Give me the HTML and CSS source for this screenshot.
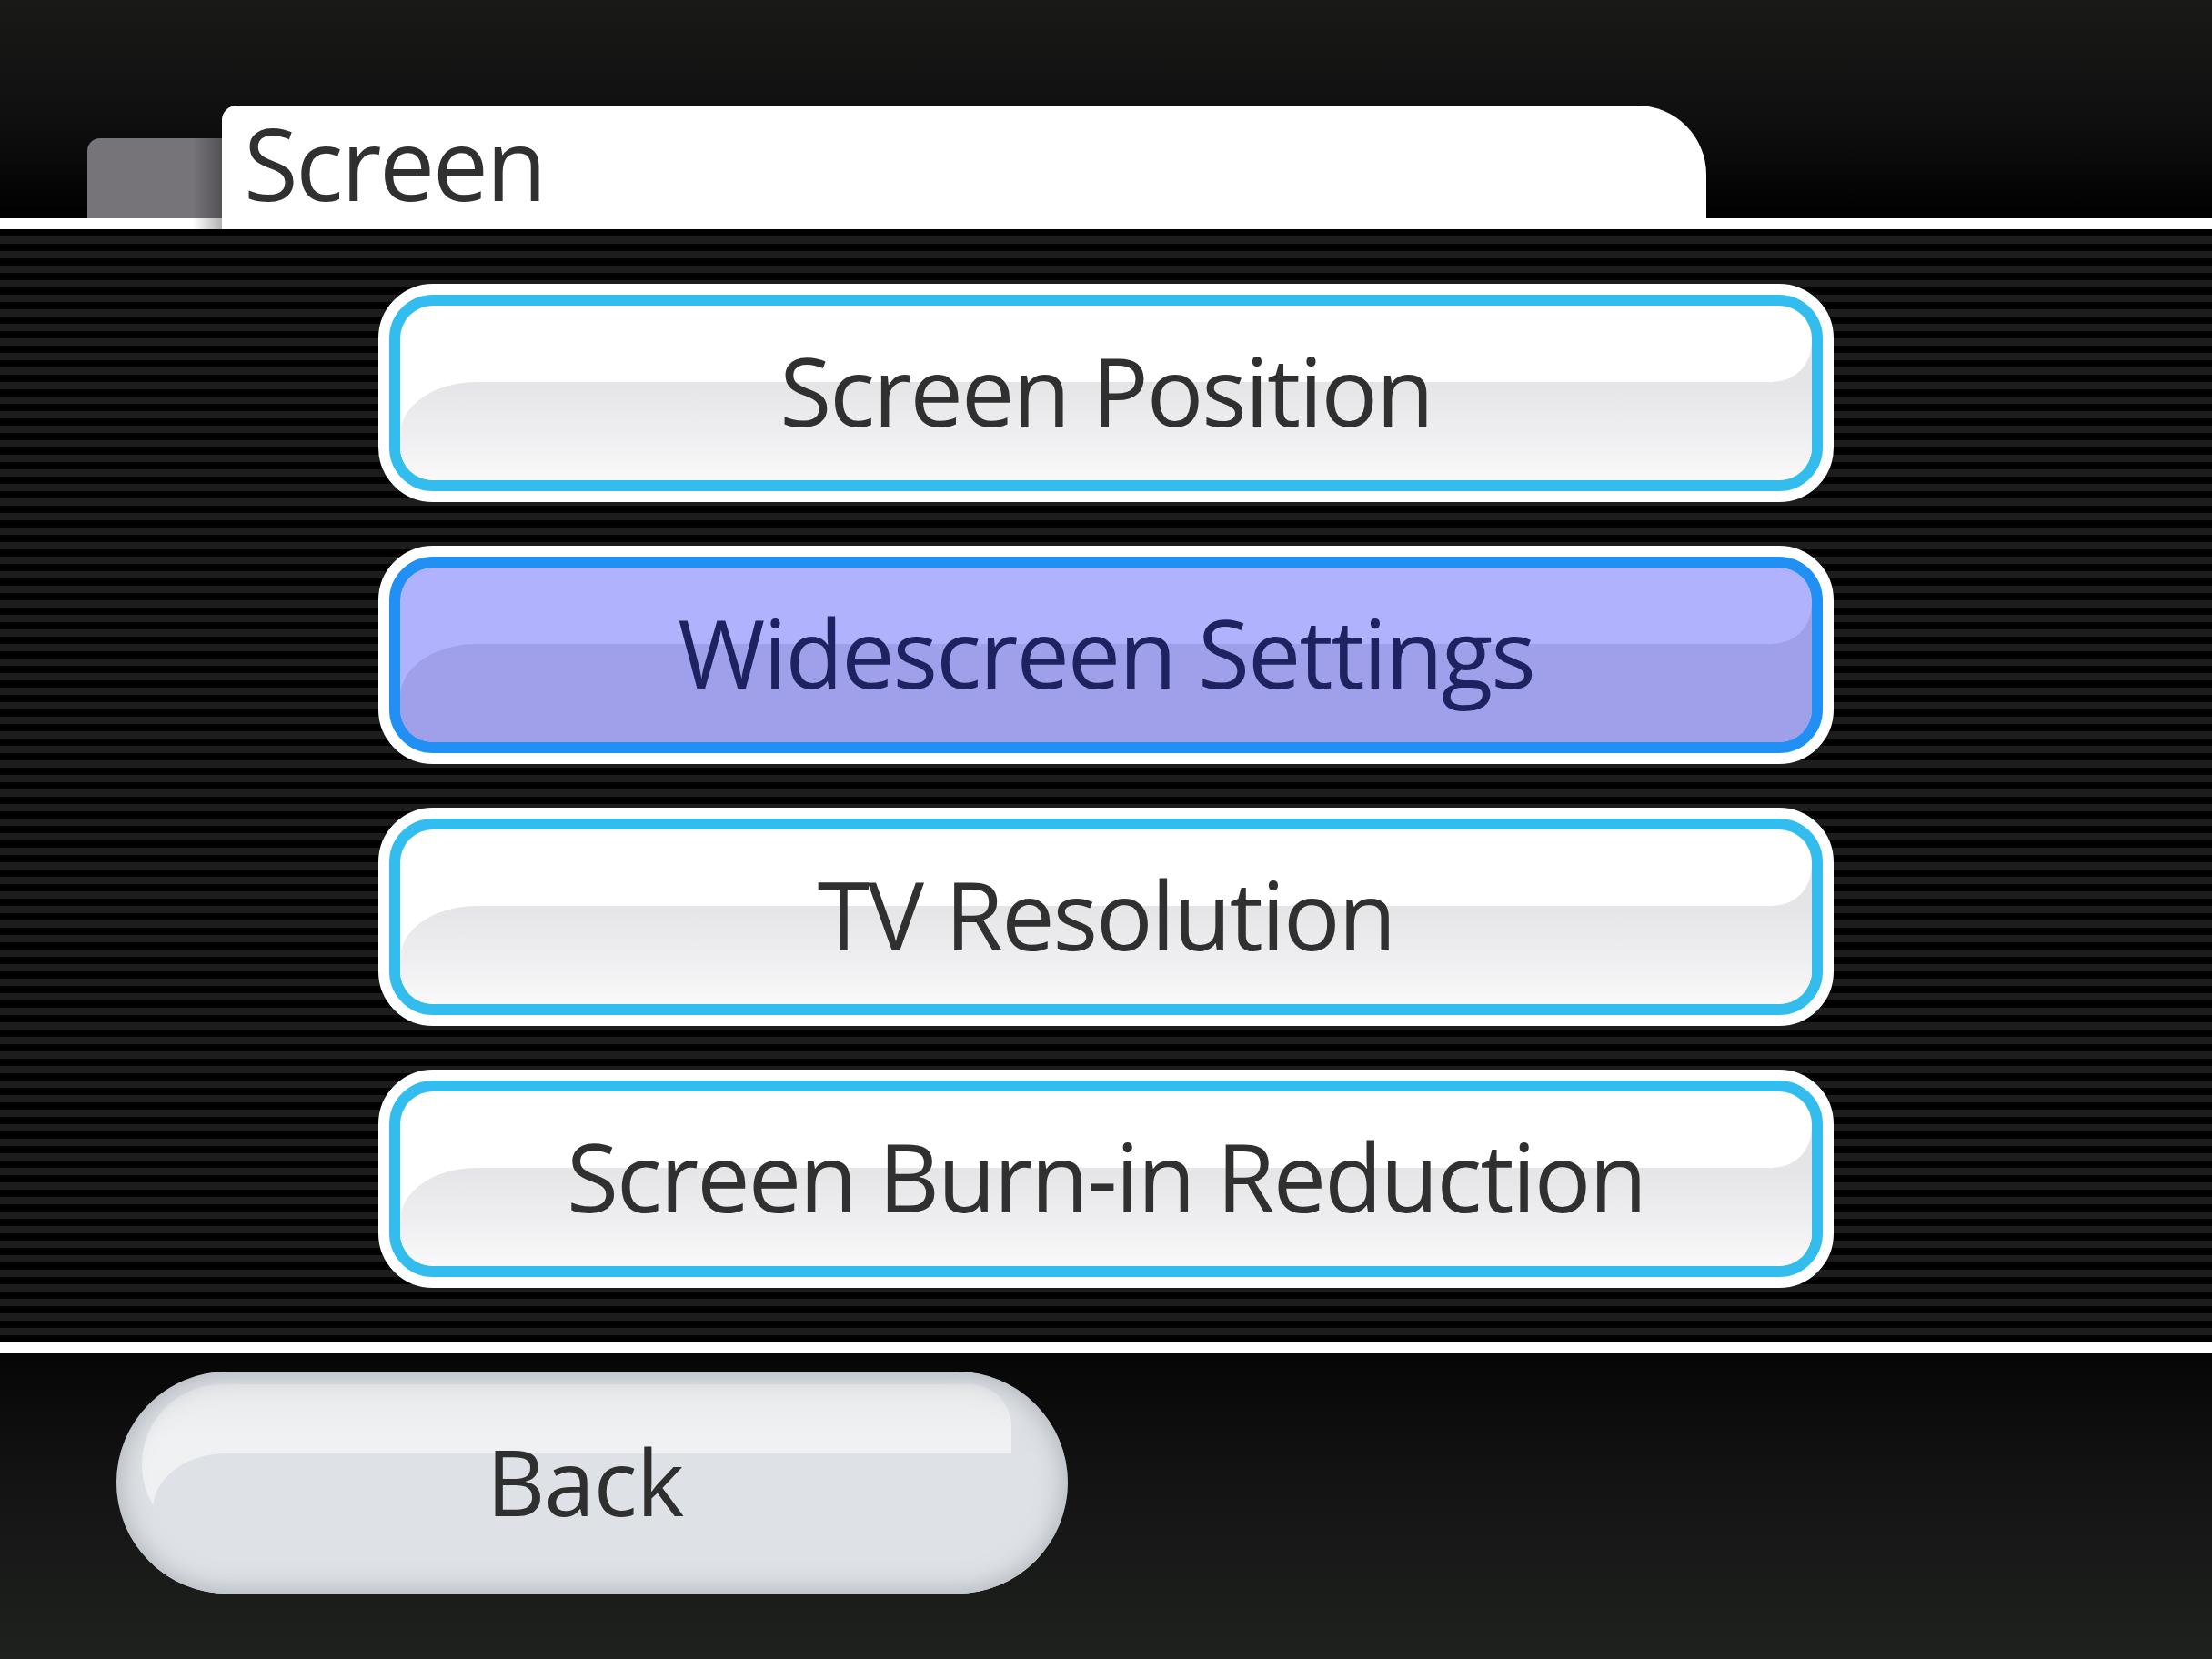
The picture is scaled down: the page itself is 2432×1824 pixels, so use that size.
FILE: index.html
```html
<!DOCTYPE html>
<html lang="en">
<head>
<meta charset="utf-8">
<title>Screen</title>
<link rel="stylesheet" href="styles.css">
</head>
<body>
<div class="screen">
  <header class="top">
    <div class="tab-back"></div>
    <div class="tab"><span class="tab-title">Screen</span></div>
  </header>
  <div class="rule"></div>
  <main class="stripes">
    <div class="menu">
      <div class="opt"><div class="opt-inner"><span class="opt-label">Screen Position</span></div></div>
      <div class="opt opt-selected"><div class="opt-inner"><span class="opt-label">Widescreen Settings</span></div></div>
      <div class="opt"><div class="opt-inner"><span class="opt-label">TV Resolution</span></div></div>
      <div class="opt"><div class="opt-inner"><span class="opt-label">Screen Burn-in Reduction</span></div></div>
    </div>
  </main>
  <div class="rule"></div>
  <footer class="bottom">
    <div class="back">
      <span class="back-hl"></span>
      <span class="back-lo"></span>
      <span class="back-label">Back</span>
    </div>
  </footer>
</div>
</body>
</html>
```
FILE: styles.css
```css
html, body {
  margin: 0;
  padding: 0;
  background: #000;
}

.screen {
  width: 2432px;
  height: 1824px;
  overflow: hidden;
  font-family: "Open Sans", "Noto Sans", sans-serif;
  color: #303030;
}

.top {
  height: 240px;
  display: flex;
  align-items: flex-end;
  padding-left: 96px;
  box-sizing: border-box;
  background: linear-gradient(#191a18, #0e0e0e 60%, #000);
  position: relative;
  z-index: 2;
}

.tab-back {
  width: 160px;
  height: 88px;
  margin-right: -12px;
  border-top-left-radius: 14px;
  background: #767479;
  flex: none;
}

.tab {
  position: relative;
  width: 1632px;
  height: 136px;
  margin-bottom: -12px;
  box-sizing: border-box;
  padding: 8px 0 0 24px;
  background: #fff;
  border-radius: 16px 76px 0 0;
  flex: none;
}

.tab::before {
  content: "";
  position: absolute;
  left: -32px;
  top: 36px;
  bottom: 0;
  width: 32px;
  background: linear-gradient(to right, rgba(0,0,0,0), rgba(0,0,0,0.3));
}

.tab-title {
  display: block;
  font-size: 109px;
  line-height: 1;
  letter-spacing: -2.5px;
  color: #303030;
}

.rule {
  height: 12px;
  background: #fff;
}

.stripes {
  height: 1224px;
  box-sizing: border-box;
  padding-top: 60px;
  display: flex;
  justify-content: center;
  background: repeating-linear-gradient(to bottom, #000 0, #000 8px, #1a1d1a 8px, #1a1d1a 16px);
}

.menu {
  width: 1600px;
  display: flex;
  flex-direction: column;
  gap: 48px;
}

.opt {
  height: 240px;
  box-sizing: border-box;
  border: 12px solid #fff;
  border-radius: 60px;
  padding: 12px;
  background: #33bdee;
}

.opt-inner {
  position: relative;
  height: 192px;
  border-radius: 36px;
  overflow: hidden;
  background: #fff;
  display: flex;
  align-items: center;
  justify-content: center;
  padding-bottom: 6px;
  box-sizing: border-box;
}

.opt-inner::before {
  content: "";
  position: absolute;
  left: 0;
  right: 0;
  top: 84px;
  bottom: 0;
  border-top-left-radius: 84px 58px;
  background: linear-gradient(#e5e4e7, #efeff1 55%, #f9f9fa);
}

.opt-inner::after {
  content: "";
  position: absolute;
  right: 0;
  top: 42px;
  width: 42px;
  height: 42px;
  background: radial-gradient(circle 42px at 0 0, rgba(229,228,231,0) 41px, #e5e4e7 42px);
}

.opt-label {
  position: relative;
  z-index: 1;
  font-size: 104px;
  line-height: 1;
  letter-spacing: -2px;
  color: #303030;
  white-space: nowrap;
}

.opt-selected {
  background: #2190f5;
}

.opt-selected .opt-inner {
  background: #b0b2fd;
}

.opt-selected .opt-inner::before {
  background: #9fa0e9;
}

.opt-selected .opt-inner::after {
  background: radial-gradient(circle 42px at 0 0, rgba(159,160,233,0) 41px, #9fa0e9 42px);
}

.opt-selected .opt-label {
  color: #1f2260;
}

.bottom {
  height: 336px;
  box-sizing: border-box;
  padding: 20px 0 0 128px;
  background: linear-gradient(#060606, #121312 40%, #1f211f);
}

.back {
  position: relative;
  width: 1046px;
  height: 244px;
  border-radius: 122px;
  overflow: hidden;
  background: #dde1e5;
  display: flex;
  align-items: center;
  justify-content: center;
  padding: 0 16px 4px 0;
  box-sizing: border-box;
}

.back-hl {
  position: absolute;
  left: 28px;
  top: 14px;
  right: 62px;
  height: 176px;
  border-radius: 88px 46px 46px 88px / 88px 46px 46px 88px;
  background: linear-gradient(#e9eaec, #f0f1f3 35%, #eeeff1);
}

.back-lo {
  position: absolute;
  left: 40px;
  top: 90px;
  right: 30px;
  bottom: 0;
  border-top-left-radius: 80px 62px;
  background: #dee2e6;
}

.back::after {
  content: "";
  position: absolute;
  inset: 0;
  border-radius: 122px;
  box-shadow: inset 0 0 26px 4px rgba(140, 146, 154, 0.55);
  z-index: 1;
}

.back-label {
  position: relative;
  z-index: 2;
  font-size: 100px;
  line-height: 1;
  letter-spacing: -1px;
  color: #2f2f2f;
}
```
